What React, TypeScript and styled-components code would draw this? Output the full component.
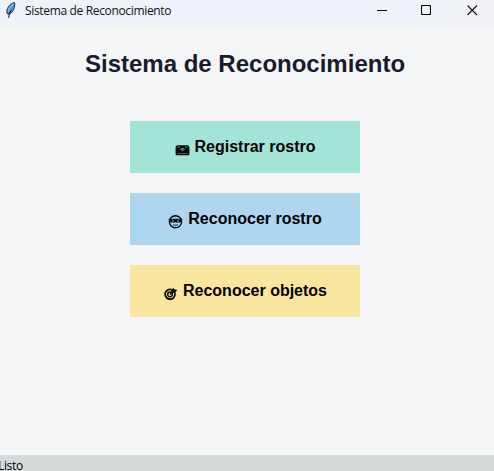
import React from "react";
import styled, { createGlobalStyle } from "styled-components";

const GlobalStyle = createGlobalStyle`
  * { box-sizing: border-box; }
  body { margin: 0; overflow: hidden; }
`;

const Window = styled.div`
  width: 494px;
  height: 471px;
  display: flex;
  flex-direction: column;
  background: #f4f6f8;
  overflow: hidden;
`;

const TitleBar = styled.header`
  height: 26px;
  flex: none;
  display: flex;
  align-items: flex-start;
  background: linear-gradient(90deg, #edf3f8 0%, #f0f3fa 50%, #f1f3f9 100%);
`;

const Feather = styled.svg`
  flex: none;
  margin: 2px 0 0 5px;
`;

const Caption = styled.span`
  margin-left: 8px;
  flex: 1;
  font: 12px/22px "Open Sans", "Noto Sans", sans-serif;
  letter-spacing: -0.34px;
  color: #101214;
  white-space: nowrap;
`;

const Controls = styled.div`
  display: flex;
  flex: none;
`;

const Control = styled.button<{ $width: number }>`
  width: ${(p) => p.$width}px;
  height: 20px;
  padding: 0;
  border: 0;
  background: none;
  display: flex;
  align-items: center;
  justify-content: center;
`;

const Content = styled.main`
  flex: 1;
  display: flex;
  flex-direction: column;
  align-items: center;
  padding-right: 4px;
`;

const Heading = styled.h1`
  margin: 23px 0 43px;
  font: bold 24px/29px "Liberation Sans", Arial, sans-serif;
  color: #1a1a2e;
  white-space: nowrap;
`;

const Actions = styled.div`
  display: flex;
  flex-direction: column;
  gap: 20px;
`;

const Action = styled.button<{ $color: string }>`
  width: 230px;
  height: 52px;
  padding: 0;
  border: 0;
  background: ${(p) => p.$color};
  color: #000;
  font: bold 16px/20px "Liberation Sans", Arial, sans-serif;
  display: flex;
  align-items: center;
  justify-content: center;
  gap: 5px;
  white-space: nowrap;
`;

const Glyph = styled.svg`
  flex: none;
  margin-top: 5px;
`;

const StatusBar = styled.footer`
  height: 16px;
  flex: none;
  padding-top: 2px;
  background: #d5dbdb;
  color: #000;
  font: 12px/17px "Open Sans", "Noto Sans", sans-serif;
  letter-spacing: -0.35px;
  text-indent: -2px;
`;

const CameraIcon = () => (
  <Glyph width="15" height="14" viewBox="0 0 15 14">
    <path d="M.6 4 2 2.2H13L14.4 4V11.5L13.7 12.3H1.3L.6 11.5Z" fill="#050a08" />
    <path d="M2.5 4H5M10 4H12.5" stroke="#6b9488" strokeWidth=".9" />
    <path d="M5 7 6 5.5H9L10 7" fill="none" stroke="#6b9488" strokeWidth=".8" />
    <path d="M6.5 7H8.5" stroke="#a3e4d7" strokeWidth="1.2" />
    <path d="M2.5 10.5H12.5" stroke="#57796e" strokeWidth=".8" />
  </Glyph>
);

const FaceIcon = () => (
  <Glyph width="15" height="14" viewBox="0 0 15 14">
    <ellipse cx="7.5" cy="6.7" rx="6.1" ry="6" fill="none" stroke="#05080a" strokeWidth="1.4" />
    <path d="M.8 3.8H14.2V5.8Q12.8 7.8 10.5 7.8 8.5 7.8 7.5 6.9 6.5 7.8 4.5 7.8 2.2 7.8 .8 5.8Z" fill="#080c0f" />
    <path d="M3.8 4.5 5.5 5.5M9.3 5.5 11 4.5M4 6.8H5.8M9.2 6.8H11" stroke="#8fb2cc" strokeWidth=".9" />
    <path d="M5 9.8Q7.5 10.8 10 9.8" fill="none" stroke="#080c0f" strokeWidth=".9" />
  </Glyph>
);

const TargetIcon = () => (
  <Glyph width="15" height="14" viewBox="0 0 15 14">
    <circle cx="7" cy="7.3" r="4.9" fill="none" stroke="#0b0a06" strokeWidth="1.9" />
    <circle cx="7" cy="7.4" r="2.3" fill="none" stroke="#0b0a06" strokeWidth="1.5" />
    <path d="M7 7.5 11 3.8" stroke="#0b0a06" strokeWidth="1.7" />
    <path d="M8 4 10.2 .7 11.4 2.2 14.3 3 12.5 5.3 9.3 5.7Z" fill="#0b0a06" />
  </Glyph>
);

export default function App() {
  return (
    <Window>
      <GlobalStyle />
      <TitleBar>
        <Feather width="12" height="17" viewBox="0 0 12 17">
          <path d="M2 11.5C1 7 4.3 1.5 9.5 .6 10.5 4.5 8.5 10 4.3 12.4Z" fill="#4b91e8" stroke="#1b2530" strokeWidth=".9" />
          <path d="M8.4 2C5.5 4 4 7 3.3 10" fill="none" stroke="#83bdf3" strokeWidth="1.5" />
          <path d="M6.2 8C4.8 10 4 12 3.6 15.7" fill="none" stroke="#10151c" strokeWidth="1.1" />
        </Feather>
        <Caption>Sistema de Reconocimiento</Caption>
        <Controls>
          <Control $width={43} aria-label="Minimizar">
            <svg width="10" height="10"><path d="M0 5.5H10" stroke="#000" /></svg>
          </Control>
          <Control $width={46} aria-label="Maximizar">
            <svg width="10" height="10"><rect x=".5" y=".5" width="9" height="9" rx="1" fill="none" stroke="#000" strokeWidth="1.1" /></svg>
          </Control>
          <Control $width={45} aria-label="Cerrar">
            <svg width="10" height="10" overflow="visible"><path d="M.5 .5 10 10M10 .5 .5 10" stroke="#111" strokeWidth="1.1" /></svg>
          </Control>
        </Controls>
      </TitleBar>
      <Content>
        <Heading>Sistema de Reconocimiento</Heading>
        <Actions>
          <Action $color="#a3e4d7"><CameraIcon />Registrar rostro</Action>
          <Action $color="#aed6f1"><FaceIcon />Reconocer rostro</Action>
          <Action $color="#f9e79f"><TargetIcon />Reconocer objetos</Action>
        </Actions>
      </Content>
      <StatusBar>Listo</StatusBar>
    </Window>
  );
}
